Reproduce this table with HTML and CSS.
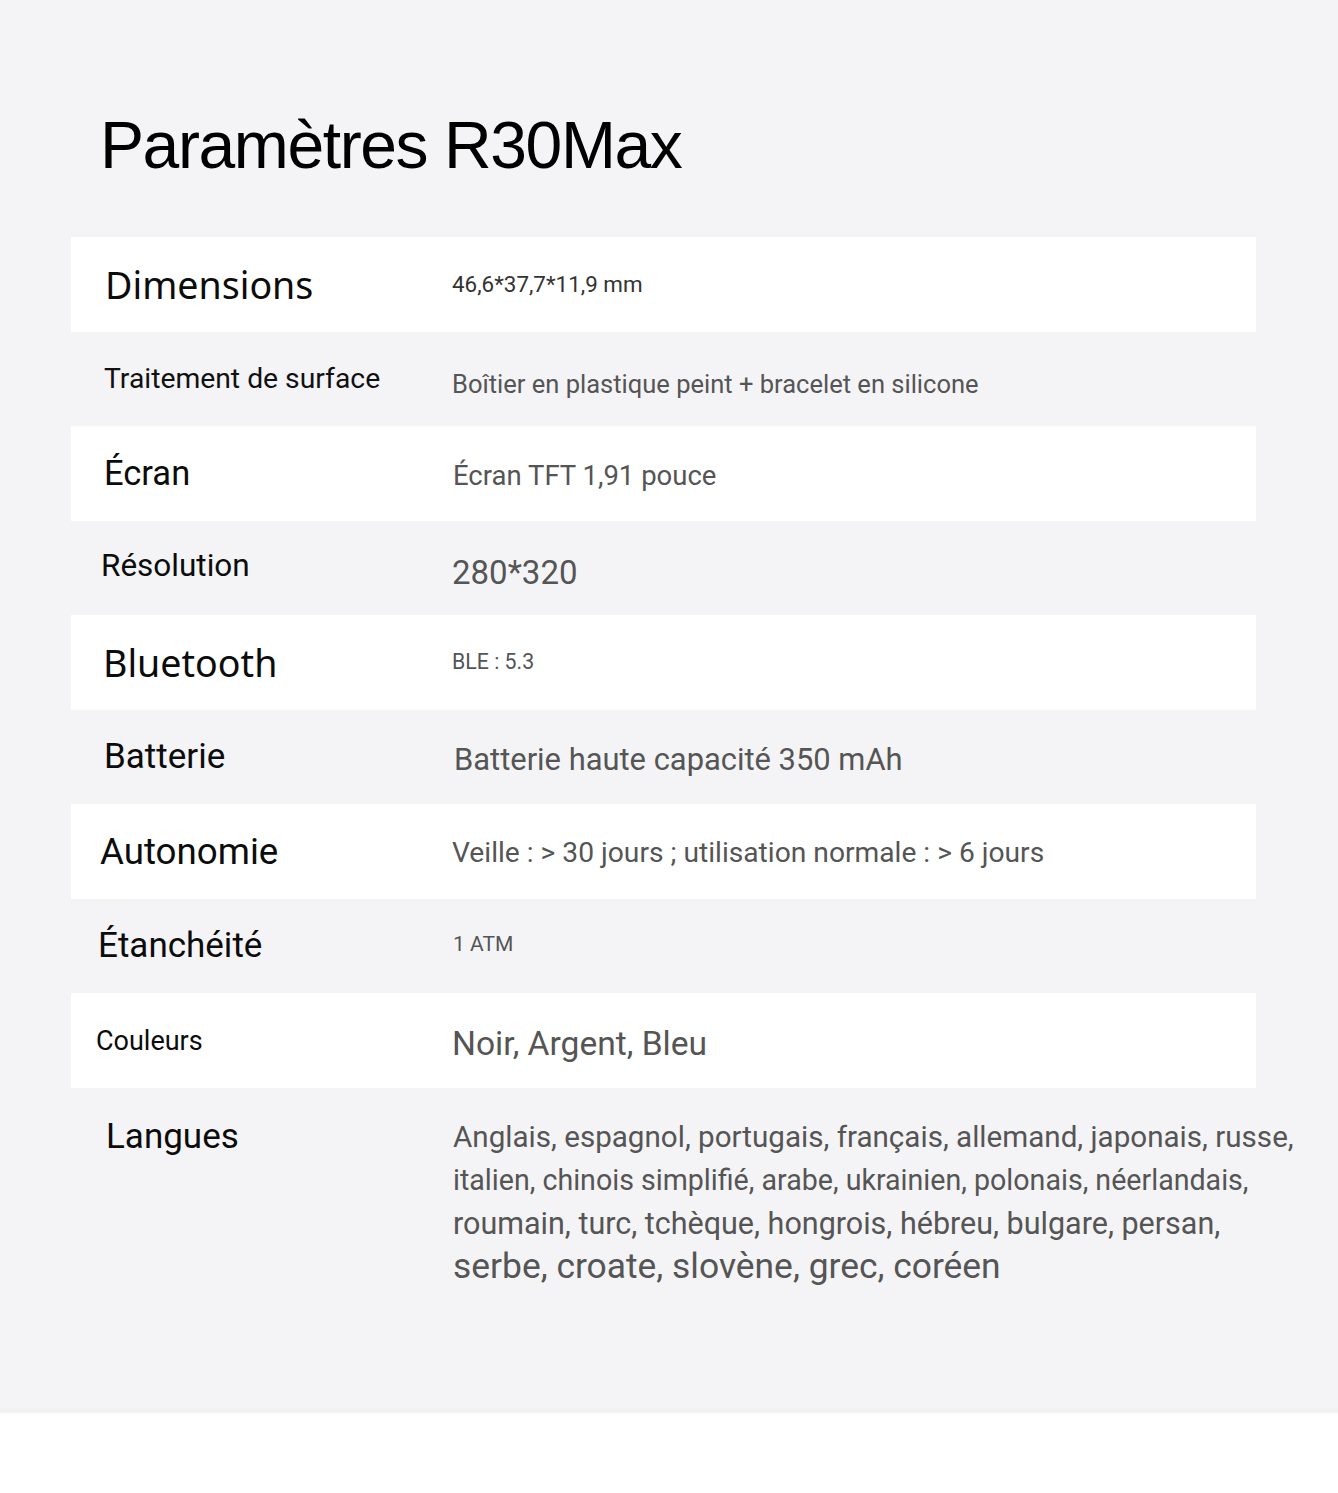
FILE: index.html
```html
<!DOCTYPE html>
<html lang="fr">
<head>
<meta charset="utf-8">
<title>Paramètres R30Max</title>
<link rel="stylesheet" href="styles.css">
</head>
<body>
<main class="sheet">
  <h1 class="title">Paramètres R30Max</h1>
  <section class="specs">
    <div class="row white">
      <div class="label l-dim">Dimensions</div>
      <div class="value v-dim">46,6*37,7*11,9 mm</div>
    </div>
    <div class="row">
      <div class="label l-surf">Traitement de surface</div>
      <div class="value v-surf">Boîtier en plastique peint + bracelet en silicone</div>
    </div>
    <div class="row white">
      <div class="label l-ecran">Écran</div>
      <div class="value v-ecran">Écran TFT 1,91 pouce</div>
    </div>
    <div class="row">
      <div class="label l-res">Résolution</div>
      <div class="value v-res">280*320</div>
    </div>
    <div class="row white">
      <div class="label l-bt">Bluetooth</div>
      <div class="value v-bt">BLE : 5.3</div>
    </div>
    <div class="row">
      <div class="label l-bat">Batterie</div>
      <div class="value v-bat">Batterie haute capacité 350 mAh</div>
    </div>
    <div class="row white">
      <div class="label l-auto">Autonomie</div>
      <div class="value v-auto">Veille : &gt; 30 jours ; utilisation normale : &gt; 6 jours</div>
    </div>
    <div class="row">
      <div class="label l-eta">Étanchéité</div>
      <div class="value v-eta">1 ATM</div>
    </div>
    <div class="row white">
      <div class="label l-coul">Couleurs</div>
      <div class="value v-coul">Noir, Argent, Bleu</div>
    </div>
    <div class="row langs">
      <div class="label l-lang">Langues</div>
      <div class="value v-lang">
        <span class="ln l1">Anglais, espagnol, portugais, français, allemand, japonais, russe,</span>
        <span class="ln l2">italien, chinois simplifié, arabe, ukrainien, polonais, néerlandais,</span>
        <span class="ln l3">roumain, turc, tchèque, hongrois, hébreu, bulgare, persan,</span>
        <span class="ln l4">serbe, croate, slovène, grec, coréen</span>
      </div>
    </div>
  </section>
</main>
</body>
</html>
```

FILE: styles.css
```css
html, body {
  margin: 0;
  padding: 0;
  background: #ffffff;
}

.sheet {
  background: #f4f4f6;
  height: 1408px;
  border-bottom: 5px solid #f1f1f2;
  font-family: Roboto, "Liberation Sans", sans-serif;
}

.title {
  margin: 0;
  padding: 112px 0 0 100px;
  height: 237px;
  box-sizing: border-box;
  font-family: "Liberation Sans", Arial, sans-serif;
  font-weight: 400;
  font-size: 66px;
  line-height: 1;
  color: #000;
  letter-spacing: -1.4px;
}

.specs {
  margin-left: 71px;
  width: 1185px;
}

.row {
  display: flex;
  align-items: center;
  height: 94.5px;
}

.row.white {
  background: #fff;
}

.label {
  width: 381px;
  flex: none;
  box-sizing: border-box;
  color: #0c0c0c;
  font-family: Roboto, sans-serif;
  white-space: nowrap;
}

.value {
  color: #555555;
  font-family: Roboto, "Liberation Sans", sans-serif;
  white-space: nowrap;
}

.l-dim { padding-left: 34px; font-size: 37.6px; font-family: "Noto Sans", sans-serif; }
.v-dim { font-size: 22.4px; color: #333; }

.l-surf { padding-left: 33px; font-size: 28.3px; color: #111; }
.v-surf { font-size: 25.5px; margin-top: 10px; }

.l-ecran { padding-left: 33px; font-size: 34.5px; }
.v-ecran { font-size: 27.5px; margin-left: 1px; margin-top: 4px; }

.l-res { padding-left: 30px; font-size: 31.5px; margin-top: -4px; }
.v-res { font-size: 33px; margin-top: 10px; }

.l-bt { padding-left: 32px; font-size: 37.6px; font-family: "Noto Sans", sans-serif; }
.v-bt { font-size: 21.3px; margin-top: -2px; }

.l-bat { padding-left: 33px; font-size: 35px; }
.v-bat { font-size: 30.9px; margin-left: 2px; margin-top: 6px; }

.l-auto { padding-left: 29px; font-size: 36.7px; }
.v-auto { font-size: 28.2px; margin-top: 2px; }

.l-eta { padding-left: 27px; font-size: 35px; }
.v-eta { font-size: 21px; margin-top: -4px; margin-left: 1px; }

.l-coul { padding-left: 25px; font-size: 27px; margin-top: 2px; }
.v-coul { font-size: 33.6px; margin-top: 6px; }

.row.langs {
  align-items: flex-start;
  height: auto;
  padding-top: 28px;
}

.l-lang { padding-left: 35px; font-size: 35px; }
.v-lang {
  display: flex;
  flex-direction: column;
  font-size: 29.6px;
  line-height: 43px;
  margin-left: 1px;
}
.v-lang .l2 { font-size: 28.6px; }
.v-lang .l3 { font-size: 30.5px; }
.v-lang .l4 { font-size: 35.4px; }
```
